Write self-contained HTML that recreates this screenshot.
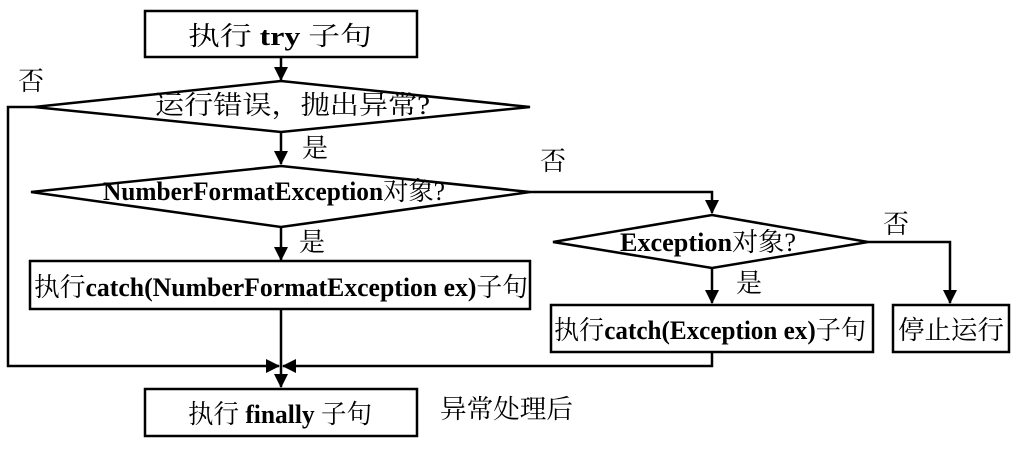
<!DOCTYPE html>
<html><head><meta charset="utf-8"><style>
body{margin:0;background:#fff;width:1029px;height:460px;overflow:hidden}
svg text{font-family:"Liberation Serif","Noto Serif CJK SC",serif;font-size:26px;fill:#000}
.b{font-weight:bold}
</style></head><body>
<svg width="1029" height="460" viewBox="0 0 1029 460">
<defs>
<marker id="a2" viewBox="0 0 14 14" markerWidth="14" markerHeight="14" refX="13" refY="7" orient="auto" markerUnits="userSpaceOnUse"><path d="M0,0 L14,7 L0,14 Z"/></marker></defs>
<g stroke="#000" stroke-width="2.5" fill="none">
<rect x="145" y="11" width="272" height="46"/>
<line x1="281" y1="57" x2="281" y2="80" marker-end="url(#a2)"/>
<polygon points="281,81 530,107 281,132 34,107"/>
<polyline points="34,107 8,107 8,366 279,366" marker-end="url(#a2)"/>
<line x1="281" y1="132" x2="281" y2="164" marker-end="url(#a2)"/>
<polygon points="281,166 530,192 281,227 31,192"/>
<line x1="281" y1="227" x2="281" y2="260" marker-end="url(#a2)"/>
<rect x="30" y="261" width="500" height="48"/>
<line x1="281" y1="309" x2="281" y2="387" marker-end="url(#a2)"/>
<rect x="145" y="389" width="272" height="47"/>
<polyline points="530,192 712,192 712,213" marker-end="url(#a2)"/>
<polygon points="712,215 868,242 712,268 553,242"/>
<line x1="712" y1="268" x2="712" y2="303" marker-end="url(#a2)"/>
<polyline points="868,242 950,242 950,303" marker-end="url(#a2)"/>
<rect x="551" y="305" width="322" height="47"/>
<rect x="893" y="305" width="116" height="47"/>
<polyline points="712,352 712,366 283,366" marker-end="url(#a2)"/>
</g>
<text x="188" y="45" textLength="184" lengthAdjust="spacingAndGlyphs">执行 <tspan class="b">try</tspan> 子句</text>
<text x="18" y="90">否</text>
<text x="155" y="114" textLength="275" lengthAdjust="spacingAndGlyphs">运行错误，抛出异常?</text>
<text x="302" y="157">是</text>
<text x="540" y="170">否</text>
<text x="103" y="200" class="b" textLength="342" lengthAdjust="spacingAndGlyphs">NumberFormatException<tspan font-weight="normal">对象?</tspan></text>
<text x="299" y="251">是</text>
<text x="34" y="296" textLength="494" lengthAdjust="spacingAndGlyphs">执行<tspan class="b">catch(NumberFormatException ex)</tspan>子句</text>
<text x="620" y="251" textLength="176" lengthAdjust="spacingAndGlyphs"><tspan class="b">Exception</tspan>对象?</text>
<text x="883" y="233">否</text>
<text x="736" y="292">是</text>
<text x="554" y="339" textLength="312" lengthAdjust="spacingAndGlyphs">执行<tspan class="b">catch(Exception ex)</tspan>子句</text>
<text x="898" y="339" textLength="106" lengthAdjust="spacingAndGlyphs">停止运行</text>
<text x="188" y="423" textLength="184" lengthAdjust="spacingAndGlyphs">执行 <tspan class="b">finally</tspan> 子句</text>
<text x="440" y="418" textLength="133" lengthAdjust="spacingAndGlyphs">异常处理后</text>
</svg>
</body></html>
